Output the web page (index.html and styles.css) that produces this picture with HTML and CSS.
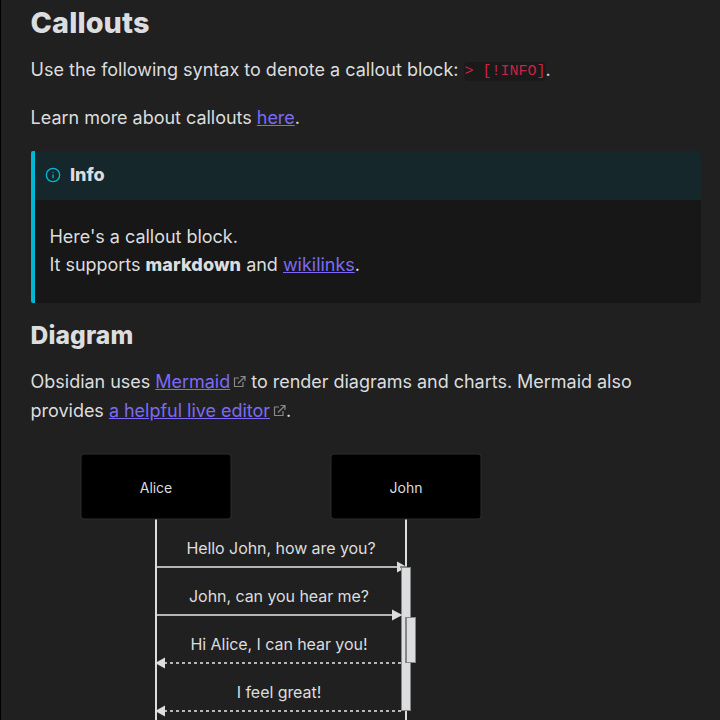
FILE: index.html
```
<!DOCTYPE html>
<html lang="en">
<head>
<meta charset="utf-8">
<title>Callouts</title>
<link rel="stylesheet" href="styles.css">
</head>
<body>
<svg class="defs" aria-hidden="true">
  <symbol id="external" viewBox="0 0 13 13"><path d="M6 3H1.5v8.5H10V7M7.5 1.5H12V6M12 1.5 5 8.5" fill="none" stroke="currentColor" stroke-width="1.2"/></symbol>
</svg>
<main class="note">
  <h2 class="title">Callouts</h2>
  <p class="para syntax">Use the following syntax to denote a callout block: <code class="code">&gt; [!INFO]</code>.</p>
  <p class="para learn">Learn more about callouts <a class="link" href="#">here</a>.</p>
  <section class="callout">
    <div class="callout-head">
      <svg class="info" viewBox="0 0 24 24" fill="none" stroke="currentColor" stroke-width="2" stroke-linecap="round"><circle cx="12" cy="12" r="10"/><path d="M12 16v-4M12 8h.01"/></svg>
      <span class="callout-title">Info</span>
    </div>
    <p class="callout-body">Here's a callout block.<br>It supports <strong>markdown</strong> and <a class="link" href="#">wikilinks</a>.</p>
  </section>
  <h3 class="title subtitle">Diagram</h3>
  <p class="para intro">Obsidian uses <a class="link" href="#">Mermaid</a><svg class="external"><use href="#external"/></svg> to render diagrams and charts. Mermaid also provides <a class="link" href="#">a helpful live editor</a><svg class="external"><use href="#external"/></svg>.</p>
  <svg class="diagram" viewBox="31 444 670 276" width="670" height="276">
    <path class="life" d="M156 519V720M406 519V720"/>
    <rect class="actor" x="81" y="454" width="150" height="65" rx="3"/>
    <rect class="actor" x="331" y="454" width="150" height="65" rx="3"/>
    <text class="name" x="156" y="493">Alice</text>
    <text class="name" x="406" y="493">John</text>
    <path class="message" d="M157 567H402M157 615H398"/>
    <path class="head" d="M397 561.5 407 567 397 572.5Z"/>
    <rect class="activation" x="401.5" y="567.5" width="9" height="143"/>
    <path class="edge" d="M400 567H407M406 617V663"/>
    <rect class="activation" x="406.5" y="617.5" width="9" height="45"/>
    <path class="head" d="M392 609.5 402.5 615 392 620.5Z"/>
    <path class="message dashed" d="M401 663H157M401 711H157"/>
    <path class="head" d="M165 657.5 155 663 165 668.5ZM165 705.5 155 711 165 716.5Z"/>
    <text class="label" x="281" y="554">Hello John, how are you?</text>
    <text class="label" x="279" y="602">John, can you hear me?</text>
    <text class="label" x="279" y="650">Hi Alice, I can hear you!</text>
    <text class="label" x="279" y="698">I feel great!</text>
  </svg>
</main>
</body>
</html>
```
FILE: styles.css
```
* { box-sizing: border-box; }
body {
  margin: 0;
  height: 720px;
  overflow: hidden;
  background: #202020;
  color: #dcddde;
  font: 18px/29px Inter, sans-serif;
  letter-spacing: -0.025px;
}
.defs { display: none; }
.note {
  height: 720px;
  overflow: hidden;
  border-left: 1px solid #000;
  padding: 5px 19px 0 29.6px;
}
.title { margin: 0; font-size: 28.8px; line-height: 36px; font-weight: 800; letter-spacing: 0.1px; }
.para { margin: 15px 0 0; }
.syntax { margin-top: 14px; letter-spacing: 0; }
.learn { margin-top: 19px; }
.link { color: #7c6af5; text-decoration: underline; text-underline-offset: auto; }
.code {
  position: relative;
  top: -1px;
  padding: 1px 0 1px 1px;
  border-radius: 4px;
  background: #1a1a1a;
  color: #c92344;
  font: 15px "Liberation Mono", monospace;
}
.callout {
  margin: 19px 0 0 0.4px;
  height: 152px;
  border-left: 4px solid #00b8d4;
  border-radius: 2px;
  background: #171717;
  overflow: hidden;
}
.callout-head {
  display: flex;
  align-items: center;
  gap: 9px;
  height: 49px;
  padding: 0 0 1px 10px;
  background: #15272b;
  font-weight: 800;
}
.callout-title { padding-bottom: 2px; }
.info { width: 16px; height: 16px; color: #00b8d4; }
.callout-body { margin: 23px 0 0 14.5px; line-height: 28px; }
strong { font-weight: 800; letter-spacing: 0.1px; }
.subtitle { margin-top: 15px; font-size: 24.6px; line-height: 34px; }
.intro { margin-top: 15px; }
.external { width: 13px; height: 13px; margin-left: 3px; color: #888; }
.diagram { display: block; margin-top: 19px; }
.life { stroke: #dcddde; stroke-width: 2; }
.actor { fill: #000; stroke: #2c2c2c; }
.name { fill: #dcddde; font-size: 14px; text-anchor: middle; }
.label { fill: #dcddde; font-size: 16px; text-anchor: middle; letter-spacing: -0.06px; }
.message { stroke: #b5b5b5; stroke-width: 2; }
.dashed { stroke-dasharray: 3; }
.head { fill: #dcddde; }
.activation { fill: #dcddde; stroke: #858686; }
.edge { stroke: #858686; stroke-width: 2; }
```
